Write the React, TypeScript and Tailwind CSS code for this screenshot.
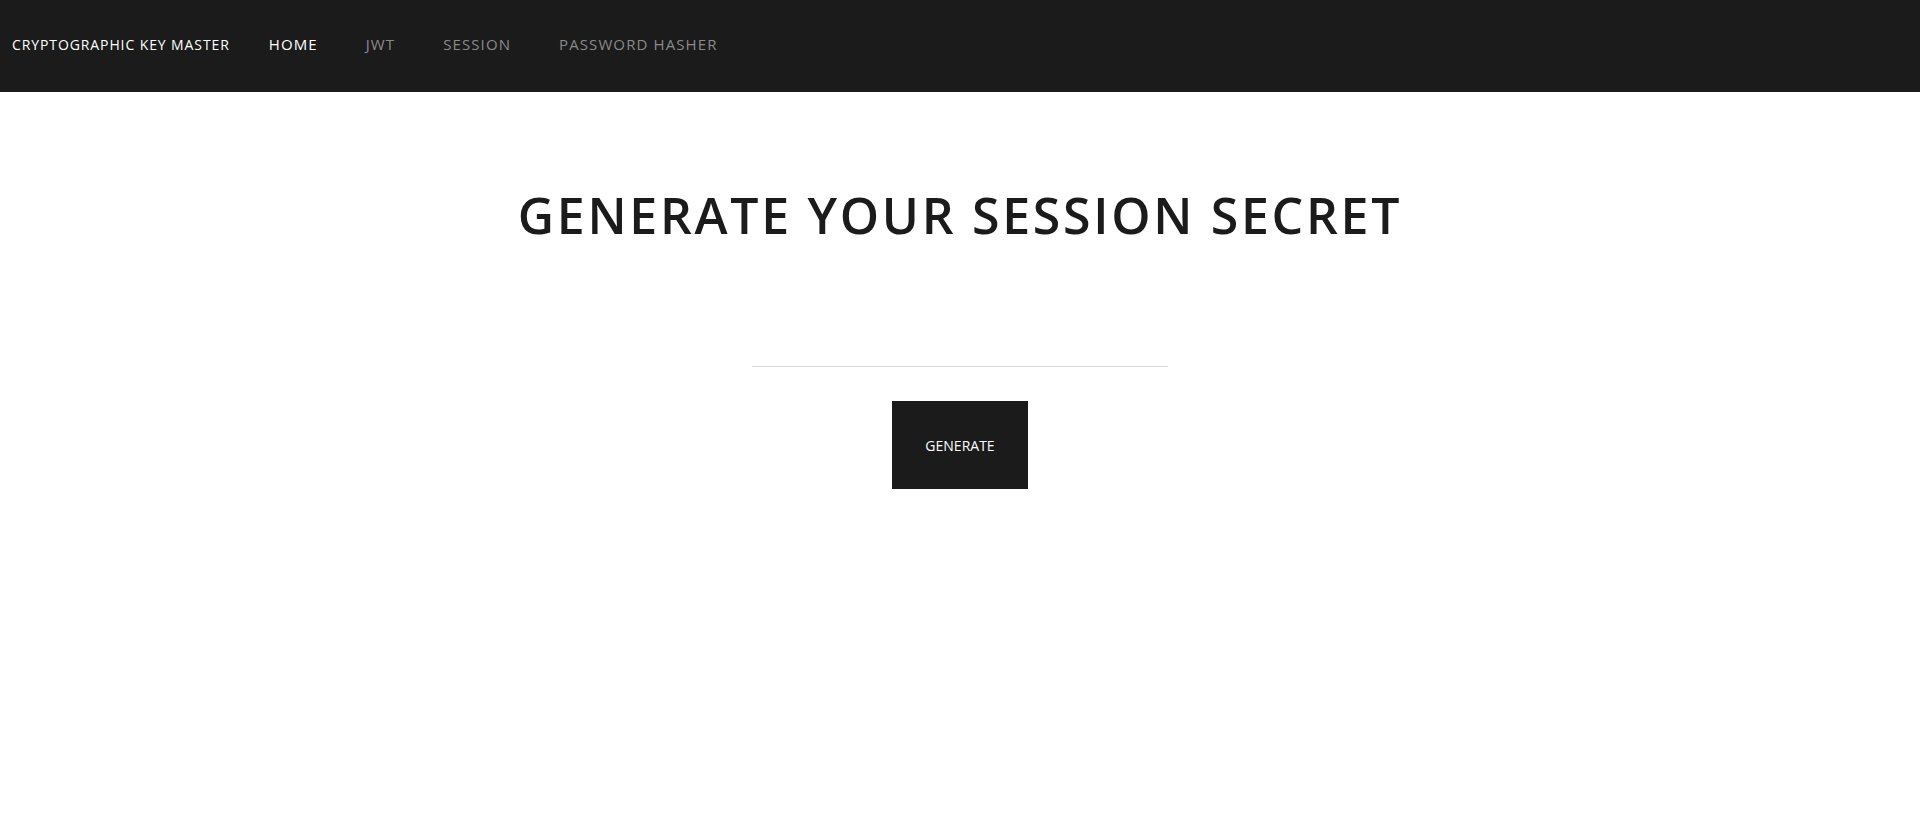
import React, { useState } from "react";

export default function App() {
  const [secret, setSecret] = useState("");

  const generate = () => {
    const bytes = new Uint8Array(32);
    crypto.getRandomValues(bytes);
    setSecret(Array.from(bytes, (b) => b.toString(16).padStart(2, "0")).join(""));
  };

  return (
    <div className="min-h-screen bg-white font-['Open_Sans',sans-serif]">
      <nav className="h-[92px] bg-[#1b1b1b] flex items-center pl-3 pb-1">
        <span className="text-white text-[14px] font-medium tracking-[0.9px]">CRYPTOGRAPHIC KEY MASTER</span>
        <ul className="flex items-center ml-[39px] gap-[48px] text-[15px] tracking-[1.1px]">
          <li className="text-white font-medium">HOME</li>
          <li className="text-[#8a8a8a]">JWT</li>
          <li className="text-[#8a8a8a]">SESSION</li>
          <li className="text-[#8a8a8a]">PASSWORD HASHER</li>
        </ul>
      </nav>

      <main className="flex flex-col items-center">
        <h1 className="mt-[90px] text-[50px] leading-[66px] font-semibold tracking-[2.7px] text-[#1b1b1b]">
          GENERATE YOUR SESSION SECRET
        </h1>
        <input
          type="text"
          value={secret}
          readOnly
          className="mt-[87px] w-[416px] h-8 border-b border-[#d9d9d9] outline-none text-center text-sm"
        />
        <button
          onClick={generate}
          className="mt-[34px] w-[136px] h-[88px] bg-[#1b1b1b] text-white text-[14px] cursor-pointer"
        >
          GENERATE
        </button>
      </main>
    </div>
  );
}
